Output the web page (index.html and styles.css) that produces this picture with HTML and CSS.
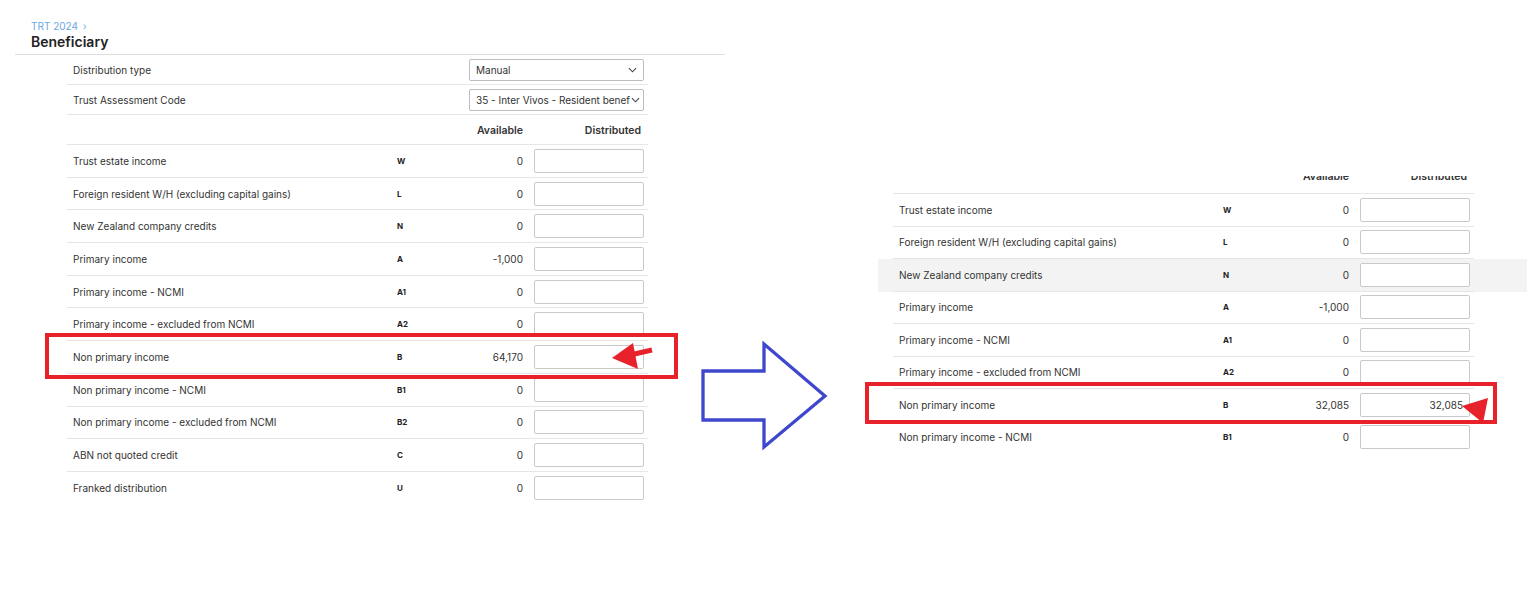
FILE: index.html
```html
<!DOCTYPE html>
<html>
<head>
  <title>Beneficiary distribution</title>
  <link rel="stylesheet" href="styles.css">
</head>
<body>
  <div class="canvas">

    <!-- before -->
    <div class="shot shot-before">
      <div class="page-head">
        <div class="crumb">TRT 2024 <span class="crumb-sep">&rsaquo;</span></div>
        <h1>Beneficiary</h1>
      </div>
      <div class="grid">
        <div class="row row-sel">
          <div class="cells sel-cells">
            <div class="label">Distribution type</div>
            <div class="select"><span class="select-text">Manual</span><svg class="chev" viewBox="0 0 10 6"><path d="M1 1l4 4 4-4"/></svg></div>
          </div>
        </div>
        <div class="row row-sel">
          <div class="cells sel-cells">
            <div class="label">Trust Assessment Code</div>
            <div class="select tight"><span class="select-text">35 - Inter Vivos - Resident beneficiary</span><svg class="chev" viewBox="0 0 10 6"><path d="M1 1l4 4 4-4"/></svg></div>
          </div>
        </div>
        <div class="row row-head">
          <div class="cells">
            <div></div>
            <div></div>
            <div class="avail">Available</div>
            <div class="dist">Distributed</div>
          </div>
        </div>
        <div class="row"><div class="cells"><div class="label">Trust estate income</div><div class="code">W</div><div class="avail">0</div><input type="text"></div></div>
        <div class="row"><div class="cells"><div class="label">Foreign resident W/H (excluding capital gains)</div><div class="code">L</div><div class="avail">0</div><input type="text"></div></div>
        <div class="row"><div class="cells"><div class="label">New Zealand company credits</div><div class="code">N</div><div class="avail">0</div><input type="text"></div></div>
        <div class="row"><div class="cells"><div class="label">Primary income</div><div class="code">A</div><div class="avail">-1,000</div><input type="text"></div></div>
        <div class="row"><div class="cells"><div class="label">Primary income - NCMI</div><div class="code">A1</div><div class="avail">0</div><input type="text"></div></div>
        <div class="row"><div class="cells"><div class="label">Primary income - excluded from NCMI</div><div class="code">A2</div><div class="avail">0</div><input type="text"></div></div>
        <div class="row"><div class="cells"><div class="label">Non primary income</div><div class="code">B</div><div class="avail">64,170</div><input type="text"></div></div>
        <div class="row"><div class="cells"><div class="label">Non primary income - NCMI</div><div class="code">B1</div><div class="avail">0</div><input type="text"></div></div>
        <div class="row"><div class="cells"><div class="label">Non primary income - excluded from NCMI</div><div class="code">B2</div><div class="avail">0</div><input type="text"></div></div>
        <div class="row"><div class="cells"><div class="label">ABN not quoted credit</div><div class="code">C</div><div class="avail">0</div><input type="text"></div></div>
        <div class="row last"><div class="cells"><div class="label">Franked distribution</div><div class="code">U</div><div class="avail">0</div><input type="text"></div></div>
      </div>
    </div>

    <!-- after (cropped screenshot) -->
    <div class="shot shot-after">
      <div class="grid">
        <div class="row row-head">
          <div class="cells">
            <div></div>
            <div></div>
            <div class="avail">Available</div>
            <div class="dist">Distributed</div>
          </div>
        </div>
        <div class="row"><div class="cells"><div class="label">Trust estate income</div><div class="code">W</div><div class="avail">0</div><input type="text"></div></div>
        <div class="row"><div class="cells"><div class="label">Foreign resident W/H (excluding capital gains)</div><div class="code">L</div><div class="avail">0</div><input type="text"></div></div>
        <div class="row hover"><div class="cells"><div class="label">New Zealand company credits</div><div class="code">N</div><div class="avail">0</div><input type="text"></div></div>
        <div class="row"><div class="cells"><div class="label">Primary income</div><div class="code">A</div><div class="avail">-1,000</div><input type="text"></div></div>
        <div class="row"><div class="cells"><div class="label">Primary income - NCMI</div><div class="code">A1</div><div class="avail">0</div><input type="text"></div></div>
        <div class="row"><div class="cells"><div class="label">Primary income - excluded from NCMI</div><div class="code">A2</div><div class="avail">0</div><input type="text"></div></div>
        <div class="row"><div class="cells"><div class="label">Non primary income</div><div class="code">B</div><div class="avail">32,085</div><input type="text" value="32,085"></div></div>
        <div class="row"><div class="cells"><div class="label">Non primary income - NCMI</div><div class="code">B1</div><div class="avail">0</div><input type="text"></div></div>
      </div>
    </div>

    <!-- annotations -->
    <svg class="marks" width="1531" height="601" viewBox="0 0 1531 601">
      <polygon class="big-arrow" points="703,371 764,371 764,344 825,396 764,447 764,420 703,420"/>
      <rect class="box" x="47" y="335" width="629" height="42"/>
      <rect class="box" x="867" y="384" width="628" height="38"/>
      <line class="pointer-line" x1="630" y1="355" x2="652" y2="350"/>
      <polygon class="pointer" points="612,358 633,343 638,369"/>
      <polygon class="pointer" points="1462,406 1488,398 1483,423"/>
    </svg>
  </div>
</body>
</html>
```

FILE: styles.css
```css
body {
  margin: 0;
  background-color: #fff;
  font-family: Inter, "Noto Sans", Arial, sans-serif;
  color: #333;
}
.canvas {
  position: relative;
  width: 1531px;
  height: 601px;
  overflow: hidden;
}
.shot {
  position: absolute;
  background-color: #fff;
}
.shot-before {
  left: 0;
  top: 0;
  width: 730px;
}
.shot-after {
  left: 878px;
  top: 176px;
  width: 649px;
  height: 275px;
  overflow: hidden;
}
.shot-after .grid {
  margin-top: -12px;
}
.page-head {
  margin-left: 15px;
  width: 694px;
  padding: 19px 0 3px 16px;
  border-bottom: 1px solid #dedede;
}
.crumb {
  font-size: 10px;
  line-height: 14px;
  color: #6aa7e6;
}
.crumb-sep {
  margin-left: 2px;
  color: #7aaee4;
}
h1 {
  margin: 0;
  font-size: 14px;
  line-height: 18px;
  font-weight: 600;
  color: #222;
}
.row.hover {
  background-color: #f3f3f3;
}
.cells {
  display: grid;
  grid-template-columns: 324px 60px 77px 110px;
  align-items: center;
  box-sizing: border-box;
  width: 581px;
  height: 32.7px;
  padding: 0 4px 0 6px;
  border-bottom: 1px solid #e6e6e6;
  font-size: 10px;
}
.shot-before .grid {
  margin-left: 67px;
}
.shot-after .cells {
  margin-left: 15px;
  height: 32.5px;
}
.row.last .cells {
  border-bottom: none;
}
.row-sel .cells,
.row-head .cells {
  height: 30px;
}
.sel-cells {
  grid-template-columns: 396px 175px;
}
.label {
  white-space: nowrap;
}
.code {
  font-size: 8px;
  font-weight: 700;
  color: #222;
}
.avail {
  text-align: right;
  padding-right: 11px;
}
.row-head .avail,
.row-head .dist {
  font-size: 10.5px;
  font-weight: 600;
  color: #333;
}
.row-head .dist {
  text-align: right;
  padding-right: 3px;
}
.row-head .cells {
  padding-top: 2px;
}
.shot-after .row-head .cells {
  height: 30px;
  padding-top: 0;
  padding-bottom: 4px;
}
input {
  box-sizing: border-box;
  width: 110px;
  height: 24px;
  margin: 0;
  padding: 0 6px;
  border: 1px solid #c9c9c9;
  border-radius: 2px;
  background-color: #fff;
  font-family: inherit;
  font-size: 10px;
  color: #333;
  text-align: right;
}
.select {
  display: flex;
  align-items: center;
  box-sizing: border-box;
  width: 175px;
  height: 22px;
  padding: 0 6px;
  border: 1px solid #bdbdbd;
  border-radius: 2px;
  font-size: 10px;
}
.select-text {
  flex: 1;
  overflow: hidden;
  white-space: nowrap;
}
.select.tight {
  padding-right: 3px;
}
.chev {
  width: 9px;
  height: 6px;
  margin-left: 4px;
  fill: none;
  stroke: #444;
  stroke-width: 1.2;
}
.select.tight .chev {
  margin-left: 1px;
}
.marks {
  position: absolute;
  left: 0;
  top: 0;
  pointer-events: none;
}
.big-arrow {
  fill: none;
  stroke: #3f48cc;
  stroke-width: 3.3;
  stroke-linejoin: miter;
}
.box {
  fill: none;
  stroke: #e8222a;
  stroke-width: 4;
}
.pointer {
  fill: #e8222a;
}
.pointer-line {
  stroke: #e8222a;
  stroke-width: 5;
}
```
